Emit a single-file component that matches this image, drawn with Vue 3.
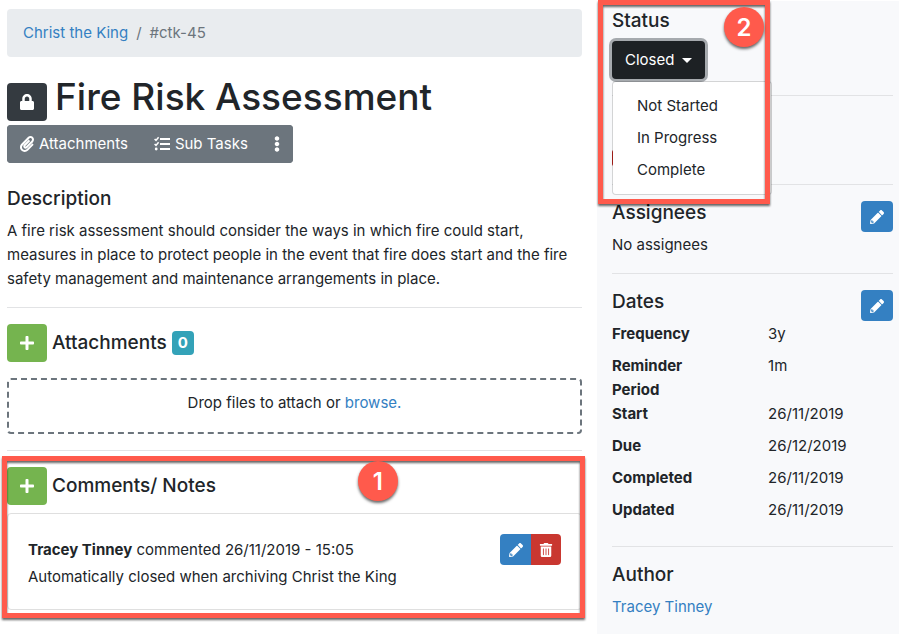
<template>
  <div class="page">
    <main class="main">
      <nav class="breadcrumb" aria-label="breadcrumb">
        <a href="#">Christ the King</a>
        <span class="divider">/</span>
        <span>#ctk-45</span>
      </nav>

      <div class="title-row">
        <button type="button" class="btn btn-dark btn-square" aria-label="Locked">
          <svg class="icon" viewBox="0 0 448 512"><path :d="icons.lock" /></svg>
        </button>
        <h1>Fire Risk Assessment</h1>
      </div>

      <div class="toolbar">
        <button type="button" class="btn btn-secondary">
          <svg class="icon" viewBox="0 0 448 512"><path :d="icons.paperclip" /></svg>
          Attachments
        </button>
        <button type="button" class="btn btn-secondary">
          <svg class="icon icon-wide" viewBox="0 0 16 16">
            <path class="stroke" d="M.6 3l1.4 1.4L4.6 1.2M.6 8l1.4 1.4 2.6-3.2" />
            <circle cx="2.2" cy="13" r="1.4" />
            <path d="M6 2h10v2H6zM6 7h10v2H6zM6 12h10v2H6z" />
          </svg>
          Sub Tasks
        </button>
        <button type="button" class="btn btn-secondary" aria-label="More">
          <svg class="icon icon-narrow" viewBox="0 0 192 512"><path :d="icons.ellipsis" /></svg>
        </button>
      </div>

      <section class="description">
        <h5>Description</h5>
        <p>
          A fire risk assessment should consider the ways in which fire could start,
          measures in place to protect people in the event that fire does start and the fire
          safety management and maintenance arrangements in place.
        </p>
      </section>

      <hr />

      <section>
        <div class="section-head">
          <button type="button" class="btn btn-success btn-square" aria-label="Add attachment">
            <svg class="icon" viewBox="0 0 448 512"><path :d="icons.plus" /></svg>
          </button>
          <h5>Attachments</h5>
          <span class="badge">0</span>
        </div>
        <div class="dropzone">
          Drop files to attach or <a href="#">browse.</a>
        </div>
      </section>

      <hr />

      <section class="comments">
        <div class="section-head">
          <button type="button" class="btn btn-success btn-square" aria-label="Add comment">
            <svg class="icon" viewBox="0 0 448 512"><path :d="icons.plus" /></svg>
          </button>
          <h5>Comments/ Notes</h5>
        </div>
        <div class="card">
          <div v-for="comment in comments" :key="comment.id" class="comment">
            <div class="comment-text">
              <div><b>{{ comment.author }}</b> commented {{ comment.date }}</div>
              <div>{{ comment.body }}</div>
            </div>
            <div class="btn-group">
              <button type="button" class="btn btn-sm btn-primary" aria-label="Edit comment">
                <svg class="icon" viewBox="0 0 512 512"><path :d="icons.pencil" /></svg>
              </button>
              <button type="button" class="btn btn-sm btn-danger" aria-label="Delete comment">
                <svg class="icon" viewBox="0 0 448 512"><path :d="icons.trash" /></svg>
              </button>
            </div>
          </div>
        </div>
        <div class="frame frame-comments"></div>
        <span class="marker marker-comments">1</span>
      </section>
    </main>

    <aside class="sidebar">
      <section class="status">
        <h5>Status</h5>
        <div class="dropdown">
          <button
            type="button"
            class="btn btn-status"
            aria-haspopup="true"
            :aria-expanded="menuOpen"
            @click="menuOpen = !menuOpen"
          >
            {{ status }}
            <span class="caret"></span>
          </button>
          <ul v-if="menuOpen" class="menu">
            <li v-for="option in options" :key="option">
              <button type="button" class="menu-item" @click="selectStatus(option)">
                {{ option }}
              </button>
            </li>
          </ul>
        </div>
        <div class="frame frame-status"></div>
        <span class="marker marker-status">2</span>
      </section>

      <hr />

      <section class="priority">
        <div class="priority-bar"></div>
      </section>

      <hr />

      <section class="assignees">
        <div class="side-head">
          <h5>Assignees</h5>
          <button type="button" class="btn btn-sm btn-primary" aria-label="Edit assignees">
            <svg class="icon" viewBox="0 0 512 512"><path :d="icons.pencil" /></svg>
          </button>
        </div>
        <div>No assignees</div>
      </section>

      <hr />

      <section class="dates">
        <div class="side-head">
          <h5>Dates</h5>
          <button type="button" class="btn btn-sm btn-primary" aria-label="Edit dates">
            <svg class="icon" viewBox="0 0 512 512"><path :d="icons.pencil" /></svg>
          </button>
        </div>
        <dl>
          <template v-for="row in dates" :key="row.label">
            <dt>{{ row.label }}</dt>
            <dd>{{ row.value }}</dd>
          </template>
        </dl>
      </section>

      <hr />

      <section>
        <h5>Author</h5>
        <a href="#">Tracey Tinney</a>
      </section>
    </aside>
  </div>
</template>

<script setup>
import { ref } from 'vue';

const status = ref('Closed');
const menuOpen = ref(true);
const options = ['Not Started', 'In Progress', 'Complete'];

const selectStatus = (option) => {
  status.value = option;
  menuOpen.value = false;
};

const comments = [
  {
    id: 1,
    author: 'Tracey Tinney',
    date: '26/11/2019 - 15:05',
    body: 'Automatically closed when archiving Christ the King'
  }
];

const dates = [
  { label: 'Frequency', value: '3y' },
  { label: 'Reminder Period', value: '1m' },
  { label: 'Start', value: '26/11/2019' },
  { label: 'Due', value: '26/12/2019' },
  { label: 'Completed', value: '26/11/2019' },
  { label: 'Updated', value: '26/11/2019' }
];

const icons = {
  lock: 'M400 224h-24v-72C376 68.2 307.8 0 224 0S72 68.2 72 152v72H48c-26.5 0-48 21.5-48 48v192c0 26.5 21.5 48 48 48h352c26.5 0 48-21.5 48-48V272c0-26.5-21.5-48-48-48zm-104 0H152v-72c0-39.7 32.3-72 72-72s72 32.3 72 72v72z',
  paperclip:
    'M43.246 466.142c-58.43-60.289-57.341-157.511 1.386-217.581L254.392 34c44.316-45.332 116.351-45.336 160.671 0 43.89 44.894 43.943 117.329 0 162.276L232.214 383.128c-29.855 30.537-78.633 30.111-107.982-.998-28.275-29.97-27.368-77.473 1.452-106.953l143.743-146.835c6.182-6.314 16.312-6.422 22.626-.241l22.861 22.379c6.315 6.182 6.422 16.312.241 22.626L171.427 319.927c-4.932 5.045-5.236 13.428-.648 18.292 4.372 4.634 11.245 4.711 15.688.165l182.849-186.851c19.613-20.062 19.613-52.725-.011-72.798-19.189-19.627-49.957-19.637-69.154 0L90.39 293.295c-34.763 35.56-35.299 93.12-1.191 128.313 34.01 35.093 88.985 35.137 123.058.286l172.06-175.999c6.177-6.319 16.307-6.433 22.626-.256l22.877 22.364c6.319 6.177 6.434 16.307.256 22.626l-172.06 175.998c-59.576 60.938-155.943 60.216-214.77-.485z',
  ellipsis:
    'M96 184c39.8 0 72 32.2 72 72s-32.2 72-72 72-72-32.2-72-72 32.2-72 72-72zM24 80c0 39.8 32.2 72 72 72s72-32.2 72-72S135.8 8 96 8 24 40.2 24 80zm0 352c0 39.8 32.2 72 72 72s72-32.2 72-72-32.2-72-72-72-72 32.2-72 72z',
  plus: 'M416 208H272V64c0-17.67-14.33-32-32-32h-32c-17.67 0-32 14.33-32 32v144H32c-17.67 0-32 14.33-32 32v32c0 17.67 14.33 32 32 32h144v144c0 17.67 14.33 32 32 32h32c17.67 0 32-14.33 32-32V304h144c17.67 0 32-14.33 32-32v-32c0-17.67-14.33-32-32-32z',
  pencil:
    'M497.9 142.1l-46.1 46.1c-4.7 4.7-12.3 4.7-17 0l-111-111c-4.7-4.7-4.7-12.3 0-17l46.1-46.1c18.7-18.7 49.1-18.7 67.9 0l60.1 60.1c18.8 18.7 18.8 49.1 0 67.9zM284.2 99.8L21.6 362.4.4 483.9c-2.9 16.4 11.4 30.6 27.8 27.8l121.5-21.3 262.6-262.6c4.7-4.7 4.7-12.3 0-17l-111-111c-4.8-4.7-12.4-4.7-17.1 0zM88 424h48v36.3l-64.5 11.3-31.1-31.1L51.7 376H88v48z',
  trash:
    'M32 464a48 48 0 0 0 48 48h288a48 48 0 0 0 48-48V128H32zm272-256a16 16 0 0 1 32 0v224a16 16 0 0 1-32 0zm-96 0a16 16 0 0 1 32 0v224a16 16 0 0 1-32 0zm-96 0a16 16 0 0 1 32 0v224a16 16 0 0 1-32 0zM432 32H312l-9.4-18.7A24 24 0 0 0 281.1 0H166.8a23.72 23.72 0 0 0-21.4 13.3L136 32H16A16 16 0 0 0 0 48v32a16 16 0 0 0 16 16h416a16 16 0 0 0 16-16V48a16 16 0 0 0-16-16z'
};
</script>

<style>
body {
  margin: 0;
  background: #fff;
}
</style>

<style scoped>
* {
  box-sizing: border-box;
}
.page {
  display: grid;
  grid-template-columns: minmax(0, 1fr) 302px;
  min-height: 100vh;
  padding-top: 1px;
  font-family: Inter, "Liberation Sans", sans-serif;
  font-size: 15px;
  line-height: 24px;
  color: #212529;
}
.main {
  padding: 8px 15px 16px 7px;
}
.sidebar {
  padding: 8px 6px 8px 15px;
  background: #f8f9fb;
}
a {
  color: #3480c2;
  text-decoration: none;
}
h1,
h5,
p {
  margin: 0;
}
h1 {
  font-size: 37px;
  font-weight: 500;
  line-height: 48px;
}
h5 {
  font-size: 19px;
  font-weight: 500;
  line-height: 24px;
}
hr {
  margin: 16px 0;
  border: 0;
  border-top: 1px solid #e2e3e5;
}

/* buttons */
.btn {
  display: inline-flex;
  align-items: center;
  justify-content: center;
  gap: 5px;
  height: 38px;
  padding: 0 13px;
  border: 0;
  border-radius: 4px;
  font: inherit;
  color: #fff;
  cursor: pointer;
}
.btn-square {
  width: 40px;
  padding: 0;
}
.btn-sm {
  width: 32px;
  height: 31px;
  padding: 0;
}
.btn-dark {
  background: #343a40;
}
.btn-secondary {
  background: #6c757d;
}
.btn-success {
  background: #75b44f;
}
.btn-primary {
  background: #3480c2;
}
.btn-danger {
  background: #c93730;
}
.icon {
  width: 14px;
  height: 16px;
  fill: currentColor;
}
.icon-wide {
  width: 16px;
}
.icon-narrow {
  width: 6px;
}
.btn-sm .icon {
  width: 14px;
  height: 14px;
}
.stroke {
  fill: none;
  stroke: currentColor;
  stroke-width: 1.5;
}

/* main column */
.breadcrumb {
  display: flex;
  gap: 8px;
  padding: 12px 16px;
  border-radius: 4px;
  background: #e9ecef;
  color: #6c757d;
}
.title-row {
  display: flex;
  align-items: flex-end;
  gap: 8px;
  margin-top: 16px;
}
.toolbar {
  display: flex;
  width: fit-content;
  margin-top: 4px;
  border-radius: 4px;
  background: #6c757d;
}
.description {
  margin-top: 24px;
}
.description p {
  margin-top: 8px;
}
.section-head {
  display: flex;
  align-items: center;
  gap: 5px;
}
.badge {
  padding: 0 6px;
  border-radius: 4px;
  background: #33a2b8;
  color: #fff;
  font-weight: 700;
}
.dropzone {
  padding: 11px 16px 17px;
  margin-top: 16px;
  border: 2px dashed #6c757d;
  border-radius: 4px;
  text-align: center;
}
.comments {
  position: relative;
}
.card {
  margin-top: 8px;
  padding: 20px;
  border: 1px solid #dfdfdf;
  border-radius: 4px;
}
.comment {
  display: flex;
  justify-content: space-between;
  align-items: flex-start;
}
.comment-text {
  display: grid;
  gap: 3px;
  padding-top: 4px;
}
.btn-group {
  display: flex;
}
.btn-group .btn:first-child {
  width: 31px;
  border-radius: 4px 0 0 4px;
}
.btn-group .btn:last-child {
  width: 30px;
  border-radius: 0 4px 4px 0;
}

/* sidebar */
.status {
  position: relative;
  z-index: 1;
}
.status + hr {
  margin-bottom: 0;
}
.dropdown {
  position: relative;
  margin-top: 8px;
}
.btn-status {
  gap: 8px;
  background: #1d2124;
  box-shadow: 0 0 0 3px #a6aaae;
}
.caret {
  border-top: 5px solid #fff;
  border-right: 5px solid transparent;
  border-left: 5px solid transparent;
}
.menu {
  position: absolute;
  top: 40px;
  left: 0;
  width: 160px;
  margin: 0;
  padding: 8px 0;
  list-style: none;
  border: 1px solid rgba(0, 0, 0, 0.15);
  border-radius: 4px;
  background: #fff;
  background-clip: padding-box;
}
.menu-item {
  width: 100%;
  padding: 4px 24px;
  border: 0;
  background: transparent;
  font: inherit;
  color: inherit;
  text-align: left;
  cursor: pointer;
}
.priority {
  height: 88px;
  padding-top: 54px;
}
.priority-bar {
  width: 48px;
  height: 16px;
  border-radius: 2px;
  background: #b8211b;
}
.priority + hr {
  margin-top: 0;
}
.side-head {
  display: flex;
  justify-content: space-between;
  height: 32px;
}
dl {
  display: grid;
  grid-template-columns: 5fr 4fr;
  margin: 0;
}
dt {
  padding-right: 48px;
  font-weight: 700;
}
dd {
  margin: 0;
  padding-bottom: 8px;
}
.sidebar section:last-child a {
  display: block;
  margin-top: 8px;
}

/* callouts drawn over the page */
.frame {
  position: absolute;
  border: 5px solid #ff5a4c;
  filter: drop-shadow(0 2px 1px rgba(0, 0, 0, 0.6));
  pointer-events: none;
}
.frame-comments {
  inset: -11px -3px -8px -5px;
}
.frame-status {
  top: -9px;
  left: -14px;
  width: 172px;
  height: 204px;
}
.marker {
  position: absolute;
  width: 40px;
  height: 40px;
  border-radius: 50%;
  background: #ff5a4c;
  box-shadow: 0 2px 3px rgba(0, 0, 0, 0.6);
  color: #fff;
  font-size: 24px;
  font-weight: 600;
  line-height: 42px;
  text-align: center;
}
.marker-comments {
  top: -6px;
  left: 61%;
}
.marker-status {
  top: -2px;
  left: 112px;
}
</style>
